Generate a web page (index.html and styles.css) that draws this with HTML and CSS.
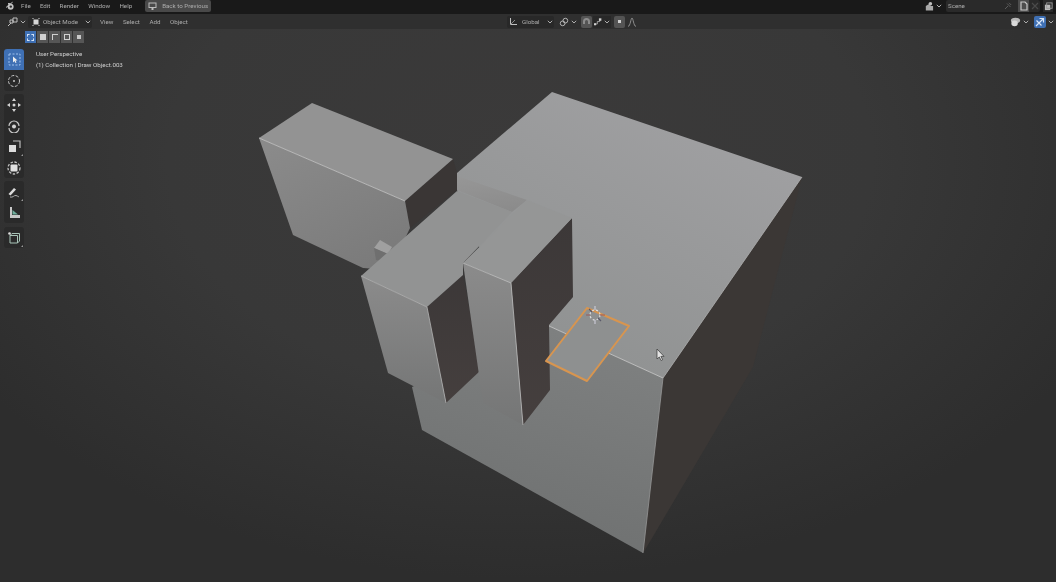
FILE: index.html
```html
<!DOCTYPE html>
<html lang="en">
  <head>
    <meta charset="UTF-8" />
    <title>Blender - Draw Object.003</title>
    <link rel="stylesheet" href="styles.css">
  </head>
  <body>
    <div class="app">
      <!-- top bar -->
      <header class="topbar">
        <svg class="logo" width="10" height="10" viewBox="0 0 10 10"><path d="M1 6.500 4.500 3.600 3 2.600h2.800L7.600 1.200" fill="none" stroke="#c4c4c4" stroke-width="1"/><circle cx="5.600" cy="5.800" r="3" fill="#c4c4c4"/><circle cx="5.800" cy="5.600" r="1.200" fill="#2a2a2a"/></svg>
        <nav class="menu">
          <span>File</span>
          <span>Edit</span>
          <span>Render</span>
          <span>Window</span>
          <span>Help</span>
        </nav>
        <button class="back">
          <svg width="9" height="9" viewBox="0 0 9 9"><rect x="1" y="1" width="7" height="4.500" fill="none" stroke="#bbb"/><path d="M4.500 8V5.500M3 7h3" stroke="#bbb"/></svg>
          <span>Back to Previous</span>
        </button>
        <div class="scene">
          <svg width="10" height="10" viewBox="0 0 11 10"><circle cx="7" cy="2.500" r="2" fill="#bdbdbd"/><path d="M2 10V5l3-2 3 2h2v5z" fill="#a8a8a8"/></svg>
          <svg class="chev" viewBox="0 0 6 4"><path d="M.8.8 3 3 5.200.8" /></svg>
          <div class="scene-field">
            <span>Scene</span>
            <svg width="8" height="8" viewBox="0 0 8 8"><path d="M1 7 4 4M3 1.500 6.500 5M5 .8 7.200 3" stroke="#5c5c5c" fill="none"/></svg>
          </div>
          <div class="scene-btn">
            <svg width="8" height="10" viewBox="0 0 8 10"><path d="M1 1h4l2 2v6H1z" fill="none" stroke="#c9c9c9" stroke-width="1.200"/></svg>
          </div>
          <div class="scene-x">
            <svg width="8" height="8" viewBox="0 0 8 8"><path d="M1 1 7 7M7 1 1 7" stroke="#4a4a4a" stroke-width="1.200"/></svg>
          </div>
          <div class="layer-btn">
            <svg width="9" height="9" viewBox="0 0 10 10"><rect x="1" y="3" width="6" height="6" fill="#bcbcbc"/><rect x="3" y="1" width="6" height="6" fill="none" stroke="#9a9a9a"/></svg>
          </div>
        </div>
      </header>

      <!-- 3d view header -->
      <div class="view-head">
        <svg width="11" height="10" viewBox="0 0 11 10"><path d="M1 9 4 6M3 3h3v3H3zM6 1h4v4H6z" fill="none" stroke="#c0c0c0"/></svg>
        <svg class="chev" viewBox="0 0 6 4"><path d="M.8.8 3 3 5.200.8" /></svg>
        <div class="dropdown mode">
          <svg width="8" height="8" viewBox="0 0 8 8"><rect x="1.500" y="1.500" width="5" height="5" fill="#d5d5d5"/><path d="M0 0h2M6 0h2M0 8h2M6 8h2" stroke="#d5d5d5"/></svg>
          <span>Object Mode</span>
          <svg class="chev" viewBox="0 0 6 4"><path d="M.8.8 3 3 5.200.8" /></svg>
        </div>
        <nav class="view-menu">
          <span>View</span>
          <span>Select</span>
          <span>Add</span>
          <span>Object</span>
        </nav>
        <div class="head-center">
          <div class="dropdown orient">
            <svg width="9" height="9" viewBox="0 0 9 9"><path d="M1.500 1v6.500H8" fill="none" stroke="#c0c0c0"/><path d="M1.500 7.500 6 3" stroke="#8a8a8a"/></svg>
            <span>Global</span>
            <svg class="chev" viewBox="0 0 6 4"><path d="M.8.8 3 3 5.200.8" /></svg>
          </div>
          <div class="pivot">
            <svg width="10" height="10" viewBox="0 0 11 11"><circle cx="4" cy="7" r="2.600" fill="none" stroke="#c0c0c0"/><circle cx="7" cy="4" r="2.600" fill="none" stroke="#c0c0c0"/></svg>
            <svg class="chev" viewBox="0 0 6 4"><path d="M.8.8 3 3 5.200.8" /></svg>
          </div>
          <div class="toggle snap-toggle">
            <svg width="9" height="9" viewBox="0 0 9 9"><path d="M1 4.500a3.500 3.500 0 0 1 7 0V7H6V4.500a1.500 1.500 0 0 0-3 0V7H1z" fill="#8c8c8c"/></svg>
          </div>
          <div class="snap">
            <svg width="9" height="8" viewBox="0 0 11 9"><path d="M1 7h3V4h3V1.500" fill="none" stroke="#bdbdbd"/><rect x="6" y="0" width="3" height="3" fill="#d0d0d0"/><rect x="0" y="6" width="2.500" height="2.500" fill="#d0d0d0"/></svg>
            <svg class="chev" viewBox="0 0 6 4"><path d="M.8.8 3 3 5.200.8" /></svg>
          </div>
          <div class="toggle prop-toggle"><i></i></div>
          <svg class="falloff" width="10" height="10" viewBox="0 0 10 10"><path d="M1 9.500C3.500 9 3.800 1 5 1s1.500 8 4 8.500" fill="none" stroke="#8f8f8f"/></svg>
        </div>
        <div class="head-right">
          <svg width="11" height="10" viewBox="0 0 12 10"><ellipse cx="6" cy="3.500" rx="5" ry="3" fill="#b8b8b8"/><ellipse cx="5" cy="6.500" rx="3.500" ry="3" fill="#dadada"/></svg>
          <svg class="chev" viewBox="0 0 6 4"><path d="M.8.8 3 3 5.200.8" /></svg>
          <div class="overlay-btn">
            <svg width="10" height="10" viewBox="0 0 10 10"><path d="M1 9 8 2M4.500 1.500H8.500V5.500M1.500 3.500 6.500 8.500" fill="none" stroke="#d9e6f7" stroke-width="1.200"/></svg>
          </div>
          <svg class="chev" viewBox="0 0 6 4"><path d="M.8.8 3 3 5.200.8" /></svg>
        </div>
      </div>

      <!-- viewport -->
      <main class="viewport">
        <svg class="scene-3d" width="1056" height="553" viewBox="0 29 1056 553">
          <defs>
            <linearGradient id="topFace" x1="0.8" y1="0.1" x2="0.3" y2="0.9">
              <stop offset="0" stop-color="#a0a0a2" />
              <stop offset="1" stop-color="#909292" />
            </linearGradient>
            <linearGradient id="frontFace" x1="0.7" y1="0" x2="0.4" y2="1">
              <stop offset="0" stop-color="#7f8181" />
              <stop offset="1" stop-color="#6e7070" />
            </linearGradient>
            <linearGradient id="sideFace" x1="0" y1="0" x2="0" y2="1">
              <stop offset="0" stop-color="#8b8b8b" />
              <stop offset="1" stop-color="#757676" />
            </linearGradient>
            <linearGradient id="leftFace" x1="0.2" y1="0" x2="0.8" y2="1">
              <stop offset="0" stop-color="#8a8a8a" />
              <stop offset="1" stop-color="#7a7a7a" />
            </linearGradient>
            <linearGradient id="darkFace" x1="0" y1="0" x2="0" y2="1">
              <stop offset="0" stop-color="#3c3838" />
              <stop offset="1" stop-color="#453f3e" />
            </linearGradient>
            <linearGradient id="wallShade" x1="0.3" y1="0" x2="0.5" y2="1">
              <stop offset="0" stop-color="#969696" />
              <stop offset="1" stop-color="#8b8b8b" />
            </linearGradient>
          </defs>

          <!-- big cube -->
          <polygon points="802,177 797,197 753,367 645,550 643,553 663,378" fill="#3b3735" />
          <polygon points="549,326 663,378 643,553 422,430 412,387" fill="url(#frontFace)" />
          <polygon points="552,92 802,177 663,378 549,326 500,300 457,190 457,173" fill="url(#topFace)" />
          <polygon points="457,176 457,190 512,212 527,200" fill="url(#wallShade)" />
          <path d="M549,326 663,378" stroke="#cfcfcf" stroke-width="0.800" fill="none" />
          <path d="M802,177 663,378" stroke="#b0b0b0" stroke-width="0.800" fill="none" />
          <path d="M663,378 643,553" stroke="#989898" stroke-width="0.800" fill="none" />

          <!-- left block -->
          <polygon points="405,201 453,159 457,173 457,190 410,228" fill="#3a3635" />
          <polygon points="259,138 405,201 410,228 390,270 363,268 293,235" fill="url(#leftFace)" />
          <polygon points="259,138 312,103 453,159 405,201" fill="#939393" />
          <path d="M259,138 405,201" stroke="#c8c8c8" stroke-width="0.800" fill="none" />

          <!-- small cube -->
          <polygon points="374,248 380,240 392,247 388,254" fill="#a0a0a0" />
          <polygon points="374,248 388,254 386,262 376,260" fill="#6f6f6f" />

          <!-- middle block -->
          <polygon points="427,307 463,275 481,370 446,403" fill="url(#darkFace)" />
          <polygon points="361,276 427,307 446,403 388,373" fill="url(#sideFace)" />
          <polygon points="361,276 457,191 512,212 463,263 463,275 427,307" fill="#929393" />
          <path d="M361,276 427,307 446,403" stroke="#b4b4b4" stroke-width="0.800" fill="none" />

          <!-- tall block -->
          <polygon points="511,283 572,218 573,297 549,325 550,390 523,425" fill="url(#darkFace)" />
          <polygon points="463,263 511,283 523,425 483,403" fill="url(#sideFace)" />
          <polygon points="463,263 527,200 572,218 511,283" fill="#959696" />
          <path d="M463,263 511,283 523,425" stroke="#bcbcbc" stroke-width="0.800" fill="none" />

          <!-- selected plane -->
          <polygon points="587,308 629,326 587,381 546,361" fill="#8e9090" stroke="#d8954f" stroke-width="2" stroke-linejoin="round" />

          <!-- 3d cursor -->
          <g stroke-width="1.200" fill="none">
            <circle cx="595" cy="315" r="5" stroke="#ddd" stroke-dasharray="2 2" />
            <path d="M595 306v4M595 320v4" stroke="#c9c9d4" />
            <path d="M586 315h4M600 315h5" stroke="#9c5a5a" />
            <path d="M589 309l3 3M598 318l3 3" stroke="#5a5a6a" />
          </g>

          <!-- mouse pointer -->
          <path d="M657 349v10l2.300-2 1.800 3.500 1.500-.8-1.700-3.300H664z" fill="#e4e4e4" stroke="#333" stroke-width="0.700" />
        </svg>

        <div class="select-modes">
          <div class="sm sm-on"><i></i></div>
          <div class="sm"><b></b></div>
          <div class="sm"><u></u></div>
          <div class="sm"><s></s></div>
          <div class="sm"><em></em></div>
        </div>

        <div class="info">
          <p>User Perspective</p>
          <p>(1) Collection | Draw Object.003</p>
        </div>

        <div class="tools">
          <div class="tool-group">
            <div class="tool tool-on">
              <svg width="13" height="13" viewBox="0 0 13 13"><rect x="1" y="1" width="11" height="11" fill="none" stroke="#9fc0ec" stroke-dasharray="2 1.500"/><path d="M5 3.500v6l1.500-1.500 1 2 1-.5-1-2H9.500z" fill="#f0f0f0"/></svg>
            </div>
            <div class="tool">
              <svg width="14" height="14" viewBox="0 0 14 14"><circle cx="7" cy="7" r="5.500" fill="none" stroke="#c8c8c8" stroke-dasharray="3 1.500"/><circle cx="7" cy="7" r="1" fill="#c8c8c8"/></svg>
            </div>
          </div>
          <div class="tool-group">
            <div class="tool">
              <svg width="14" height="14" viewBox="0 0 14 14"><path d="M7 0 9 3H5zM7 14 5 11H9zM0 7 3 5V9zM14 7 11 9V5z" fill="#d4d4d4"/><circle cx="7" cy="7" r="1.500" fill="#d4d4d4"/></svg>
            </div>
            <div class="tool">
              <svg width="14" height="14" viewBox="0 0 14 14"><path d="M2 7a5 5 0 0 1 10 0M12 9a5 5 0 0 1-10 0" fill="none" stroke="#c8c8c8" stroke-width="1.200"/><circle cx="7" cy="7.500" r="2" fill="#d4d4d4"/></svg>
            </div>
            <div class="tool corner">
              <svg width="13" height="13" viewBox="0 0 13 13"><rect x="1" y="5" width="7" height="7" fill="#dcdcdc"/><path d="M5 1h7v7" fill="none" stroke="#bdbdbd" stroke-width="1.200"/></svg>
            </div>
            <div class="tool">
              <svg width="14" height="14" viewBox="0 0 14 14"><circle cx="7" cy="7" r="6" fill="none" stroke="#c0c0c0" stroke-dasharray="2.500 1.500" stroke-width="1.300"/><rect x="3.500" y="3.500" width="7" height="7" rx="1" fill="#e0e0e0"/></svg>
            </div>
          </div>
          <div class="tool-group">
            <div class="tool corner">
              <svg width="14" height="14" viewBox="0 0 14 14"><path d="M1.500 9 7 3l2 1.500L3.500 10.500z" fill="#dcdcdc"/><path d="M3 12c3 1 4-2 6-1.500s2 1.500 3 1" fill="none" stroke="#b0b0b0"/></svg>
            </div>
            <div class="tool">
              <svg width="13" height="13" viewBox="0 0 13 13"><path d="M2 1h2v8h8v3H2z" fill="#c8c8c8"/><path d="M4.500 4 10 8.500H4.500z" fill="#6fae9c"/></svg>
            </div>
          </div>
          <div class="tool-group">
            <div class="tool corner">
              <svg width="14" height="14" viewBox="0 0 14 14"><path d="M3 4.500h7.500V12H3zM3 4.500 5 2.500h7.500V10l-2 2" fill="none" stroke="#a8c4b8" stroke-width="1"/><circle cx="2.500" cy="2.500" r="1.300" fill="#e0e0e0"/></svg>
            </div>
          </div>
        </div>
      </main>
    </div>
  </body>
</html>
```

FILE: styles.css
```css
* {
  margin: 0;
  padding: 0;
  box-sizing: border-box;
}

html,
body {
  width: 1056px;
  height: 582px;
  overflow: hidden;
  background: #333;
}

.app {
  display: flex;
  flex-direction: column;
  height: 582px;
  font: 6.2px Roboto, "Liberation Sans", sans-serif;
  color: #adadad;
  white-space: nowrap;
}

svg {
  display: block;
  flex: none;
}

.chev {
  width: 6px;
  height: 4px;
}

.chev path {
  fill: none;
  stroke: #adadad;
  stroke-width: 1;
}

/* top bar */
.topbar {
  display: flex;
  align-items: center;
  height: 14px;
  padding: 0 0 2px 5px;
  background: #191919;
  filter: blur(0.5px);
}

.menu {
  display: flex;
  gap: 9.2px;
  margin-left: 6px;
}

.back {
  display: flex;
  align-items: center;
  gap: 4px;
  width: 66px;
  height: 12px;
  margin-left: 13px;
  padding-left: 3px;
  border: 0;
  border-radius: 2px;
  background: #494949;
  color: #adadad;
  font: inherit;
}

.back span {
  margin-left: 1px;
}

.scene {
  display: flex;
  align-items: center;
  height: 12px;
  margin-left: auto;
  padding-right: 3px;
}

.scene .chev {
  margin: 0 4px 0 2px;
}

.scene-field {
  display: flex;
  align-items: center;
  justify-content: space-between;
  width: 72px;
  height: 12px;
  padding: 0 6px 0 2px;
  background: #2a2a2a;
  border-radius: 2px 0 0 2px;
}

.scene-btn {
  display: flex;
  align-items: center;
  justify-content: center;
  width: 11px;
  height: 12px;
  background: #4d4d4d;
}

.scene-x {
  display: flex;
  align-items: center;
  justify-content: center;
  width: 11px;
  height: 12px;
  background: #2a2a2a;
  border-radius: 0 2px 2px 0;
}

.layer-btn {
  display: flex;
  align-items: center;
  justify-content: center;
  width: 10px;
  height: 12px;
  margin-left: 3px;
  background: #2a2a2a;
}

/* 3d view header */
.view-head {
  display: flex;
  align-items: center;
  height: 15px;
  padding-left: 7px;
  background: #2f2f2f;
  filter: blur(0.5px);
}

.view-head > .chev {
  margin: 0 2px;
}

.dropdown {
  display: flex;
  align-items: center;
  height: 12px;
  background: #282828;
  border-radius: 2px;
}

.mode {
  width: 64px;
  gap: 3px;
  padding: 0 1px 0 4px;
}

.mode .chev,
.orient .chev {
  margin-left: auto;
}

.view-menu {
  display: flex;
  gap: 9.5px;
  margin-left: 8px;
}

.head-center {
  position: absolute;
  left: 507px;
  display: flex;
  align-items: center;
}

.orient {
  width: 47px;
  gap: 4px;
  padding: 0 1px 0 2px;
}

.pivot {
  display: flex;
  align-items: center;
  gap: 2px;
  margin-left: 5px;
}

.toggle {
  display: flex;
  align-items: center;
  justify-content: center;
  width: 11px;
  height: 12px;
  background: #545454;
  border-radius: 2px;
}

.snap-toggle {
  margin-left: 4px;
}

.snap {
  display: flex;
  align-items: center;
  gap: 1px;
  height: 12px;
  margin-left: 1px;
  padding: 0 1px;
  background: #282828;
}

.prop-toggle {
  margin-left: 3px;
}

.prop-toggle i {
  width: 3px;
  height: 3px;
  background: #d0d0d0;
}

.falloff {
  margin-left: 2px;
}

.head-right {
  display: flex;
  align-items: center;
  margin-left: auto;
}

.head-right .chev {
  margin: 0 2px;
}

.overlay-btn {
  display: flex;
  align-items: center;
  justify-content: center;
  width: 12px;
  height: 12px;
  margin-left: 3px;
  background: #3f70b4;
  border-radius: 2px;
}

/* viewport */
.viewport {
  position: relative;
  flex: 1;
  background: radial-gradient(ellipse 640px 420px at 520px 130px, #3b3a3a 0%, #383838 55%, #2d2d2d 100%);
  overflow: hidden;
}

.scene-3d {
  position: absolute;
  left: 0;
  top: 0;
  filter: blur(0.5px);
}

.select-modes {
  position: absolute;
  left: 25px;
  top: 2px;
  display: flex;
  gap: 1px;
  filter: blur(0.5px);
}

.sm {
  display: flex;
  align-items: center;
  justify-content: center;
  width: 11px;
  height: 12px;
  background: #565656;
}

.sm-on {
  background: #3f70b4;
}

.sm i {
  width: 7px;
  height: 7px;
  border: 1px dashed #d5e3f5;
}

.sm b,
.sm u,
.sm s {
  width: 6px;
  height: 6px;
  background: #d0d0d0;
}

.sm u {
  background: none;
  border: 1px solid #d0d0d0;
  border-right-width: 0;
  border-bottom-width: 0;
}

.sm s {
  background: none;
  border: 1px solid #d0d0d0;
}

.sm em {
  width: 4px;
  height: 4px;
  background: #c8c8c8;
}

.info {
  position: absolute;
  left: 36px;
  top: 20px;
  color: #cfcfcf;
  line-height: 11px;
  filter: blur(0.4px);
}

.tools {
  position: absolute;
  left: 4px;
  top: 20px;
  display: flex;
  flex-direction: column;
  gap: 3px;
  filter: blur(0.5px);
}

.tool-group {
  width: 20px;
  background: #2a2a2a;
  border-radius: 3px;
  overflow: hidden;
}

.tool-group:last-child {
  margin-top: 1px;
}

.tool {
  position: relative;
  display: flex;
  align-items: center;
  justify-content: center;
  height: 21px;
}

.tool-on {
  background: #3f70b4;
}

/* little triangle on tools with a flyout */
.corner::after {
  content: "";
  position: absolute;
  right: 1px;
  bottom: 1px;
  border-left: 2px solid transparent;
  border-bottom: 2px solid #9a9a9a;
}
```
